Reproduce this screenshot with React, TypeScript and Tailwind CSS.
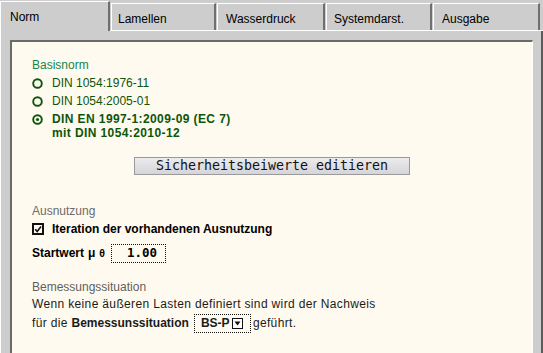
import React from 'react';

const Radio = ({ checked }: { checked?: boolean }) => (
  <svg width="11" height="11" viewBox="0 0 11 11" className="shrink-0">
    <circle cx="5.5" cy="5.5" r="4.3" fill="none" stroke="#0b560b" strokeWidth="1.9" />
    {checked && <circle cx="5.5" cy="5.5" r="1.6" fill="#0b560b" />}
  </svg>
);

const App = () => {
  const tabs = [
    { label: 'Lamellen', w: 'w-[105px] pl-[6px]' },
    { label: 'Wasserdruck', w: 'w-[108px] pl-[8px]' },
    { label: 'Systemdarst.', w: 'w-[106px] pl-[7px]' },
    { label: 'Ausgabe', w: 'w-[107px] pl-[8px]' },
  ];

  const norms = ['DIN 1054:1976-11', 'DIN 1054:2005-01'];

  return (
    <div className="w-[543px] h-[353px] overflow-hidden bg-[#cdcdcd] flex flex-col font-['Liberation_Sans',Arial,sans-serif] text-[12px] text-black">
      {/* Tabs */}
      <div className="flex items-start h-[31px] shrink-0 border-b border-white">
        <div className="w-[110px] h-[30px] mt-[1px] bg-[#cdcdcd] border-t border-l border-white border-r-2 border-r-[#6f6f6f] pl-[9px] pt-[8px] leading-[14px]">
          Norm
        </div>
        {tabs.map((t) => (
          <div
            key={t.label}
            className={`${t.w} h-[27px] mt-[3px] ml-[1px] border-t border-l border-white border-r-2 border-r-[#6f6f6f] pt-[8px] leading-[14px]`}
          >
            {t.label}
          </div>
        ))}
      </div>

      {/* Panel */}
      <div className="flex-1 border-l border-white border-r-2 border-r-[#5a5a5a] pt-[9px] pl-[9px] pr-[8px]">
        <div className="h-[330px] bg-[#fffaef] border-t-2 border-l-2 border-[#6a6a6a] border-r border-r-white pl-[20px] pt-[14px]">
          <div className="leading-[18px] text-[#11874a]">Basisnorm</div>
          {norms.map((n) => (
            <div key={n} className="flex items-center gap-[9px] h-[18px] text-[#0b560b]">
              <Radio />
              <span className="leading-[18px]">{n}</span>
            </div>
          ))}
          <div className="flex items-start gap-[9px] mt-[2px] text-[#0b560b] font-bold tracking-[0.4px]">
            <div className="pt-[2px]">
              <Radio checked />
            </div>
            <div className="leading-[14px]">
              DIN EN 1997-1:2009-09 (EC 7)
              <br />
              mit DIN 1054:2010-12
            </div>
          </div>

          <div className="flex justify-center pr-[20px] mt-[17px]">
            <button className="w-[276px] h-[18px] border border-[#9a9a9a] bg-gradient-to-b from-[#ececef] to-[#d5d5d9] font-['DejaVu_Sans_Mono',monospace] text-[13.3px] leading-[16px] text-[#111]">
              Sicherheitsbeiwerte editieren
            </button>
          </div>

          <div className="mt-[27px] leading-[18px] text-[#6b6b6b]">Ausnutzung</div>
          <div className="flex items-center h-[18px] gap-[8px] font-bold">
            <svg width="12" height="12" viewBox="0 0 12 12" className="shrink-0">
              <rect x="1" y="1" width="10" height="10" fill="#fffaef" stroke="#111" strokeWidth="2" />
              <path d="M3.2 6.2 L5.2 8.4 L9 3.4" fill="none" stroke="#111" strokeWidth="1.6" />
            </svg>
            <span className="leading-[18px]">Iteration der vorhandenen Ausnutzung</span>
          </div>
          <div className="flex items-center h-[20px] mt-[5px] font-bold">
            <span className="leading-[18px]">Startwert</span>
            <span className="leading-[18px] ml-[4px]">μ</span>
            <span className="leading-[18px] ml-[4px] text-[10.5px]">θ</span>
            <div className="ml-[6px] w-[55px] h-[19px] border border-dotted border-[#111] flex items-center justify-end pr-[8px] font-['DejaVu_Sans_Mono',monospace] text-[12.5px]">
              1.00
            </div>
          </div>

          <div className="mt-[16px] leading-[17px] text-[#5f5f5f]">Bemessungssituation</div>
          <div className="leading-[17px] tracking-[0.35px] text-[#1a1a1a]">
            Wenn keine äußeren Lasten definiert sind wird der Nachweis
          </div>
          <div className="flex items-center h-[20px] text-[#1a1a1a]">
            <span className="leading-[18px] tracking-[0.35px] whitespace-pre">für die </span>
            <span className="leading-[18px] font-bold">Bemessunssituation</span>
            <div className="ml-[5px] w-[57px] h-[19px] border border-dotted border-[#111] flex items-center pl-[6px] font-bold">
              <span className="leading-[18px]">BS-P</span>
              <svg width="11" height="11" viewBox="0 0 11 11" className="ml-[2px] shrink-0">
                <rect x="0.5" y="0.5" width="10" height="10" fill="#fff" stroke="#111" />
                <path d="M2.5 3.5 H8.5 L5.5 7.5 Z" fill="#111" />
              </svg>
            </div>
            <span className="ml-[2px] leading-[18px] tracking-[0.35px]">geführt.</span>
          </div>
        </div>
      </div>
    </div>
  );
};

export default App;
